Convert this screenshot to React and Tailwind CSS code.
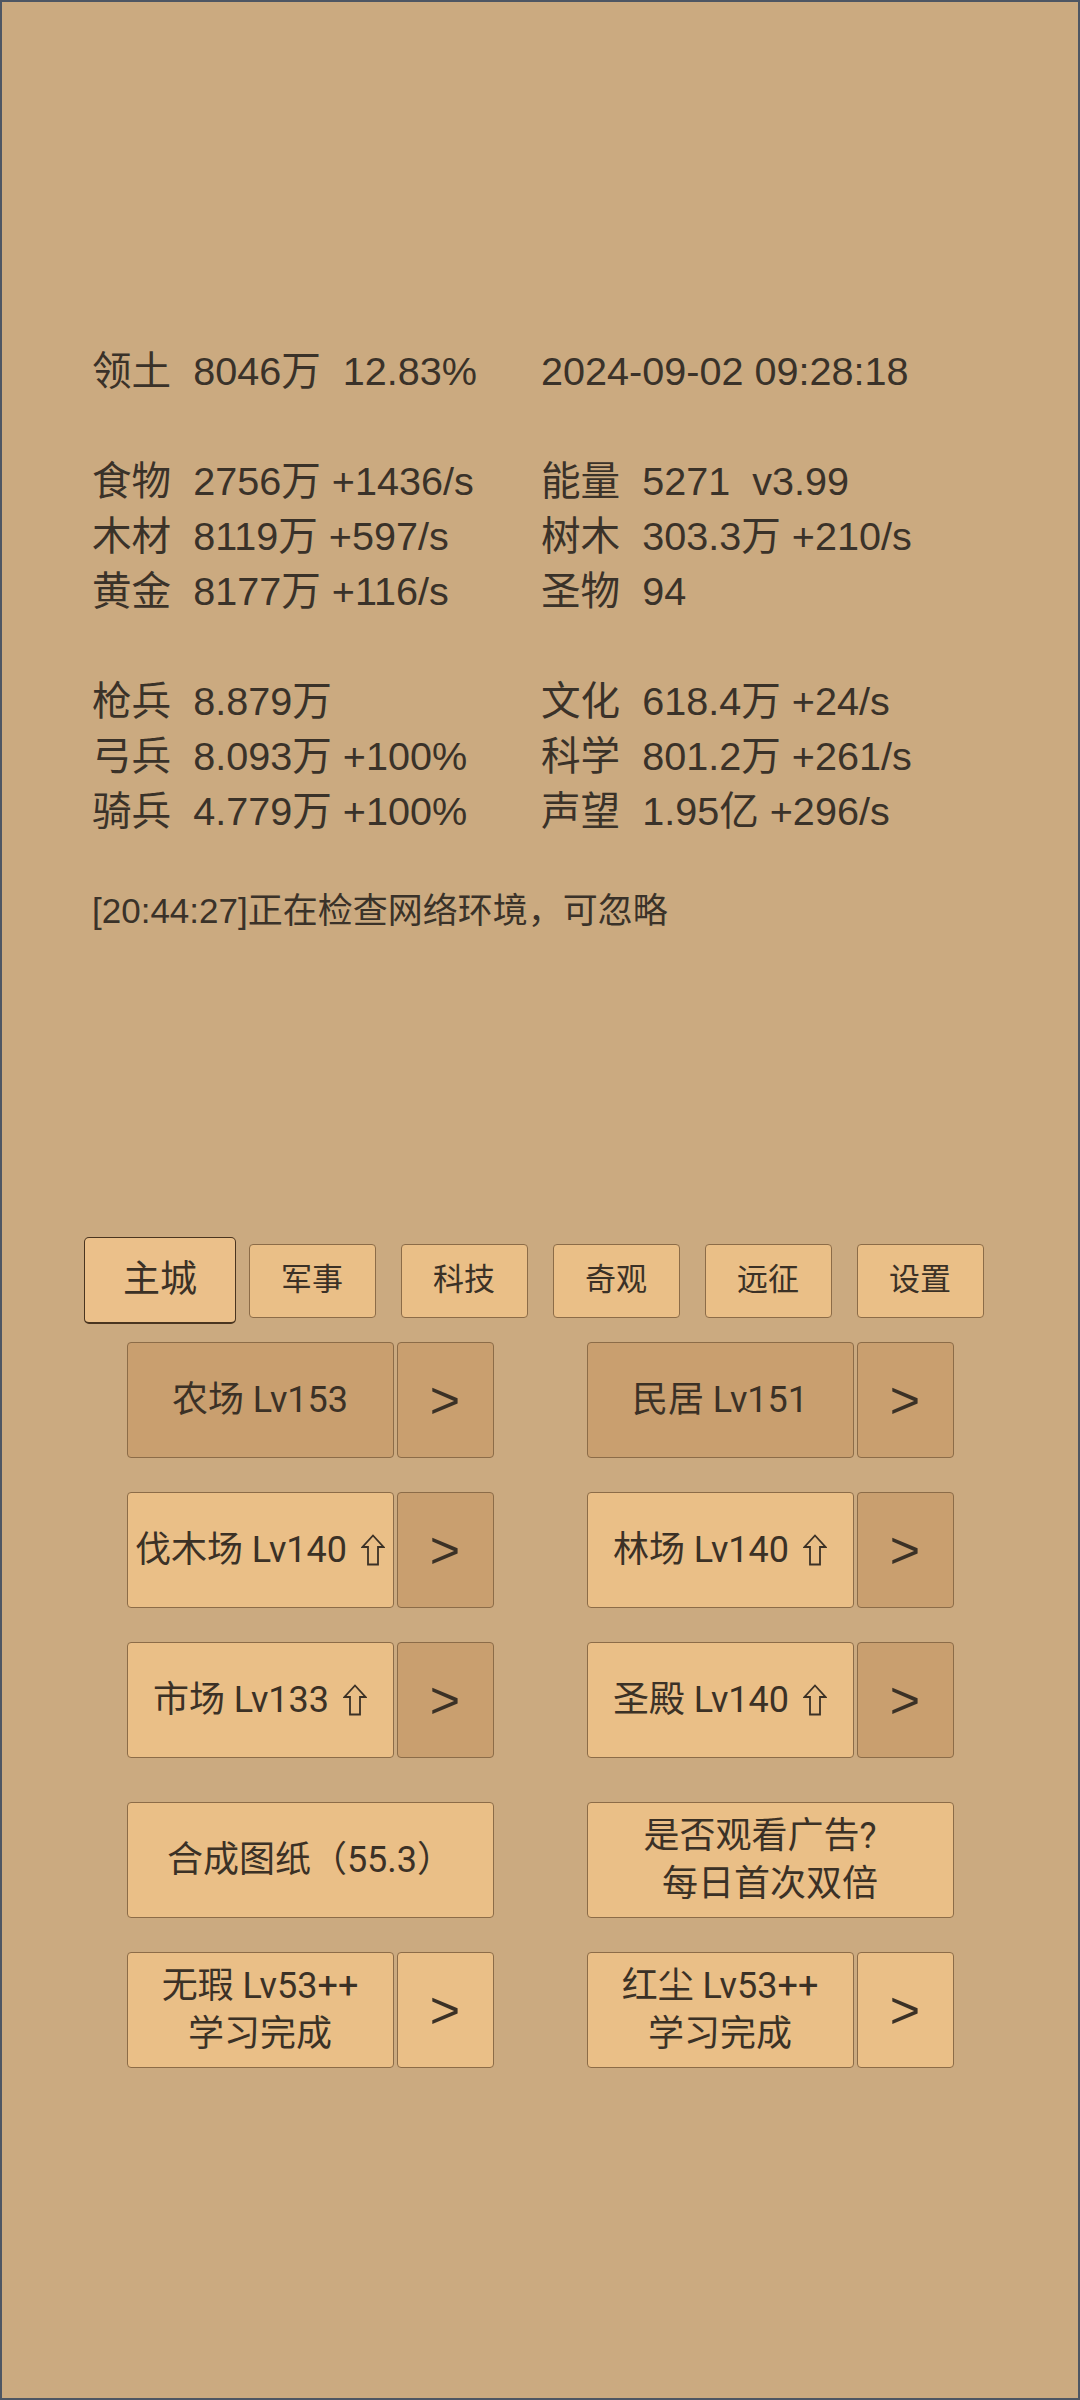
import React from "react";

const stats = [
  ["领土  8046万  12.83%", "2024-09-02 09:28:18"],
  null,
  ["食物  2756万 +1436/s", "能量  5271  v3.99"],
  ["木材  8119万 +597/s", "树木  303.3万 +210/s"],
  ["黄金  8177万 +116/s", "圣物  94"],
  null,
  ["枪兵  8.879万", "文化  618.4万 +24/s"],
  ["弓兵  8.093万 +100%", "科学  801.2万 +261/s"],
  ["骑兵  4.779万 +100%", "声望  1.95亿 +296/s"],
];

const tabs = ["主城", "军事", "科技", "奇观", "远征", "设置"];

// outlined up arrow shown after upgradable buildings
const Up = () => (
  <svg
    viewBox="0 0 24 32"
    className="inline-block w-[24px] h-[32px] ml-[14px] align-[-4px]"
    fill="none"
    stroke="currentColor"
    strokeWidth="1.8"
    strokeLinejoin="miter"
  >
    <path d="M12 1.5 L22.5 13 L17 13 L17 30.5 L7 30.5 L7 13 L1.5 13 Z" />
  </svg>
);

const Btn = ({ children, dark, className = "" }) => (
  <div
    className={
      "flex flex-col items-center justify-center rounded-[4px] border border-[#8c6c48] text-[36px] leading-[48px] text-[#3b3126] " +
      (dark ? "bg-[#c99f6f] " : "bg-[#eabf87] ") +
      className
    }
  >
    {children}
  </div>
);

const Arrow = ({ dark }) => (
  <Btn dark={dark} className="w-[97px] text-[52px] font-['Liberation_Sans',sans-serif]">
    &gt;
  </Btn>
);

const Group = ({ label, mainDark, arrowDark, up }) => (
  <div className="flex w-[367px] h-[116px] gap-[3px]">
    <Btn dark={mainDark} className="w-[267px] whitespace-pre text-center">
      {Array.isArray(label) ? (
        label.map((l, i) => <div key={i}>{l}</div>)
      ) : (
        <div>
          {label}
          {up && <Up />}
        </div>
      )}
    </Btn>
    <Arrow dark={arrowDark} />
  </div>
);

export default function App() {
  return (
    <div className="w-[1080px] h-[2400px] border-2 border-[#4e5663] bg-[#cbaa80] text-[#3a3229] font-['Roboto','Noto_Sans_CJK_SC',sans-serif]">
      <div className="pt-[342px] pl-[90px] text-[39.6px] leading-[55px] whitespace-pre font-['Liberation_Sans','Noto_Sans_CJK_SC',sans-serif]">
        {stats.map((r, i) =>
          r ? (
            <div key={i} className="flex">
              <div className="w-[449px]">{r[0]}</div>
              <div>{r[1]}</div>
            </div>
          ) : (
            <div key={i} className="h-[55px]" />
          )
        )}
        <div className="mt-[44px] text-[35px]">[20:44:27]正在检查网络环境，可忽略</div>
      </div>

      <div className="mt-[299px] flex justify-center">
        {tabs.map((t, i) => (
          <div key={t} className="w-[152px] h-[87px] flex items-center justify-center">
            {i === 0 ? (
              <div className="w-[152px] h-[87px] flex items-center justify-center rounded-[5px] border border-[#4a3520] border-b-2 bg-[#ebc08a] text-[37px] text-[#3b3126]">
                {t}
              </div>
            ) : (
              <div className="w-[127px] h-[74px] flex items-center justify-center rounded-[4px] border border-[#8c6c48] bg-[#eabf87] text-[31px] text-[#3b3126]">
                {t}
              </div>
            )}
          </div>
        ))}
      </div>

      <div className="mt-[18px] flex flex-col items-center">
        <div className="flex gap-[93px]">
          <Group label="农场 Lv153" mainDark arrowDark />
          <Group label="民居 Lv151" mainDark arrowDark />
        </div>
        <div className="mt-[34px] flex gap-[93px]">
          <Group label="伐木场 Lv140" up arrowDark />
          <Group label="林场 Lv140" up arrowDark />
        </div>
        <div className="mt-[34px] flex gap-[93px]">
          <Group label="市场 Lv133" up arrowDark />
          <Group label="圣殿 Lv140" up arrowDark />
        </div>
        <div className="mt-[44px] flex gap-[93px]">
          <Btn className="w-[367px] h-[116px]">合成图纸（55.3）</Btn>
          <Btn className="w-[367px] h-[116px] whitespace-pre">
            <div className="mr-[20px]">是否观看广告?</div>
            <div>每日首次双倍</div>
          </Btn>
        </div>
        <div className="mt-[34px] flex gap-[93px]">
          <Group label={["无瑕 Lv53++", "学习完成"]} />
          <Group label={["红尘 Lv53++", "学习完成"]} />
        </div>
      </div>
    </div>
  );
}
